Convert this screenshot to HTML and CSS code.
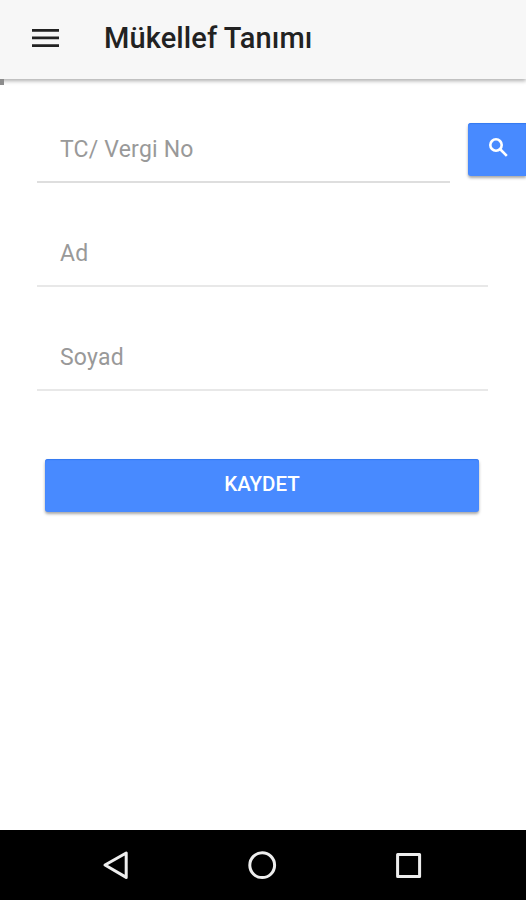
FILE: index.html
```html
<!DOCTYPE html>
<html lang="tr">
<head>
<meta charset="utf-8">
<title>Mükellef Tanımı</title>
<link rel="stylesheet" href="styles.css">
</head>
<body>
<header class="toolbar">
  <svg class="menu-icon" viewBox="0 0 27 18"><path d="M0 0h27v2.7H0zM0 7.6h27v2.7H0zM0 15.2h27v2.7H0z"/></svg>
  <h1 class="title">Mükellef Tanımı</h1>
  <span class="marker"></span>
</header>
<main class="form">
  <div class="search-row">
    <div class="field"><span class="label">TC/ Vergi No</span></div>
    <div class="button search-button">
      <svg class="search-icon" viewBox="0 0 19 19"><circle cx="7" cy="7" r="5.7"/><path d="M11 11l6.8 6.8"/></svg>
    </div>
  </div>
  <div class="field"><span class="label">Ad</span></div>
  <div class="field"><span class="label">Soyad</span></div>
  <div class="button save-button"><span class="save-text">KAYDET</span></div>
</main>
<nav class="navbar">
  <svg class="nav-icon" viewBox="0 0 30 30"><path d="M4 15L25.2 3v24.4z"/></svg>
  <svg class="nav-icon" viewBox="0 0 30 30"><circle cx="15.2" cy="15.2" r="12.4"/></svg>
  <svg class="nav-icon" viewBox="0 0 30 30"><path d="M4.6 4.6h22v22h-22z"/></svg>
</nav>
</body>
</html>
```
FILE: styles.css
```css
* { box-sizing: border-box; }
body {
  margin: 0;
  height: 900px;
  display: flex;
  flex-direction: column;
  background: #fff;
  font-family: Roboto, sans-serif;
  overflow: hidden;
}
.toolbar {
  position: relative;
  height: 79px;
  flex: none;
  display: flex;
  align-items: center;
  padding: 0 32px 3px;
  background: #f7f7f7;
  box-shadow: 0 2px 4px rgba(0, 0, 0, .32);
}
.menu-icon {
  width: 27px;
  height: 18px;
  fill: #222;
}
.title {
  margin: 0 0 0 45px;
  font-size: 29px;
  line-height: 36px;
  font-weight: 500;
  letter-spacing: .1px;
  color: #222;
  white-space: nowrap;
}
.marker {
  position: absolute;
  left: 0;
  top: 79px;
  width: 4px;
  height: 6px;
  background: #8c8c8c;
}
.form {
  flex: 1;
  padding: 0 38px 0 37px;
}
.search-row {
  display: flex;
  gap: 18px;
  margin-right: -38px;
}
.field {
  height: 104px;
  padding: 57px 23px 0;
  border-bottom: 2px solid #e8e8e8;
}
.search-row .field {
  flex: 1;
  border-bottom-color: #dedede;
}
.label {
  display: block;
  font-size: 23px;
  line-height: 28px;
  letter-spacing: .2px;
  color: #999;
}
.button {
  display: flex;
  justify-content: center;
  background: #488aff;
  box-shadow: 0 2px 3px rgba(0, 0, 0, .35), inset 0 1px 1px #3579f0;
  color: #fff;
}
.search-button {
  width: 58px;
  height: 53px;
  margin-top: 44px;
  border-radius: 3px 0 0 3px;
  padding: 15px 0 0 3px;
}
.search-icon {
  width: 19px;
  height: 19px;
  fill: none;
  stroke: #fff;
  stroke-width: 2.6;
}
.save-button {
  height: 53px;
  margin: 68px 9px 0 8px;
  border-radius: 3px;
}
.save-text {
  font-size: 20.5px;
  line-height: 51px;
  font-weight: 500;
}
.navbar {
  height: 70px;
  flex: none;
  display: flex;
  justify-content: center;
  align-items: center;
  gap: 116px;
  background: #000;
  padding-right: 2px;
}
.nav-icon {
  width: 30px;
  height: 30px;
  fill: none;
  stroke: #eee;
  stroke-width: 3;
  stroke-linejoin: round;
}
```
